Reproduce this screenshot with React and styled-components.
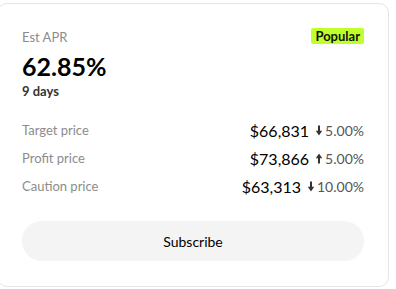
import React from "react";
import styled, { createGlobalStyle } from "styled-components";

const GlobalStyle = createGlobalStyle`
  body {
    margin: 0;
    background: #fff;
    font-family: Lato, "Open Sans", sans-serif;
  }
`;

const Card = styled.div`
  box-sizing: border-box;
  width: 392px;
  height: 284px;
  margin: 3px 0 0 -3px;
  padding: 24px 24px 0 24px;
  border: 1px solid #e6e6e6;
  border-radius: 10px;
  background: #fff;
  display: flex;
  flex-direction: column;
`;

const Top = styled.div`
  display: flex;
  justify-content: space-between;
  align-items: flex-start;
`;

const Label = styled.div`
  font-size: 13px;
  color: #8c8c8c;
  line-height: 18px;
`;

const Apr = styled.div`
  font-size: 25px;
  font-weight: 700;
  color: #000;
  line-height: 32px;
  margin-top: 4px;
`;

const Days = styled.div`
  font-size: 13px;
  font-weight: 700;
  color: #333;
  line-height: 16px;
  margin-top: 1px;
`;

const Badge = styled.span`
  background: #c0ff2a;
  color: #111;
  font-size: 13px;
  font-weight: 700;
  line-height: 16px;
  padding: 0 4px;
  border-radius: 2px;
`;

const Rows = styled.div`
  display: flex;
  flex-direction: column;
  gap: 8px;
  margin-top: 21px;
`;

const Row = styled.div`
  display: flex;
  justify-content: space-between;
  align-items: center;
  height: 20px;
`;

const Value = styled.div`
  display: flex;
  align-items: center;
  gap: 6px;
`;

const Price = styled.span`
  font-size: 16px;
  color: #000;
`;

const Change = styled.span`
  display: flex;
  align-items: center;
  gap: 2px;
  font-size: 14px;
  color: #555;
`;

const Button = styled.button`
  margin-top: 25px;
  height: 40px;
  border: none;
  border-radius: 20px;
  background: #f4f4f4;
  font-family: inherit;
  font-size: 14px;
  color: #000;
  cursor: pointer;
`;

function Arrow({ up }) {
  return (
    <svg width="8" height="11" viewBox="0 0 8 11" style={{ transform: up ? "rotate(180deg)" : "none" }}>
      <path d="M4 0.5 L4 8" stroke="#333" strokeWidth="2" />
      <path d="M0.8 5.8 L4 10.5 L7.2 5.8 Z" fill="#333" />
    </svg>
  );
}

const rows = [
  { label: "Target price", price: "$66,831", pct: "5.00%", up: false },
  { label: "Profit price", price: "$73,866", pct: "5.00%", up: true },
  { label: "Caution price", price: "$63,313", pct: "10.00%", up: false },
];

export default function App() {
  return (
    <>
      <GlobalStyle />
      <Card>
        <Top>
          <div>
            <Label>Est APR</Label>
            <Apr>62.85%</Apr>
            <Days>9 days</Days>
          </div>
          <Badge>Popular</Badge>
        </Top>
        <Rows>
          {rows.map((r) => (
            <Row key={r.label}>
              <Label>{r.label}</Label>
              <Value>
                <Price>{r.price}</Price>
                <Change>
                  <Arrow up={r.up} />
                  {r.pct}
                </Change>
              </Value>
            </Row>
          ))}
        </Rows>
        <Button>Subscribe</Button>
      </Card>
    </>
  );
}
